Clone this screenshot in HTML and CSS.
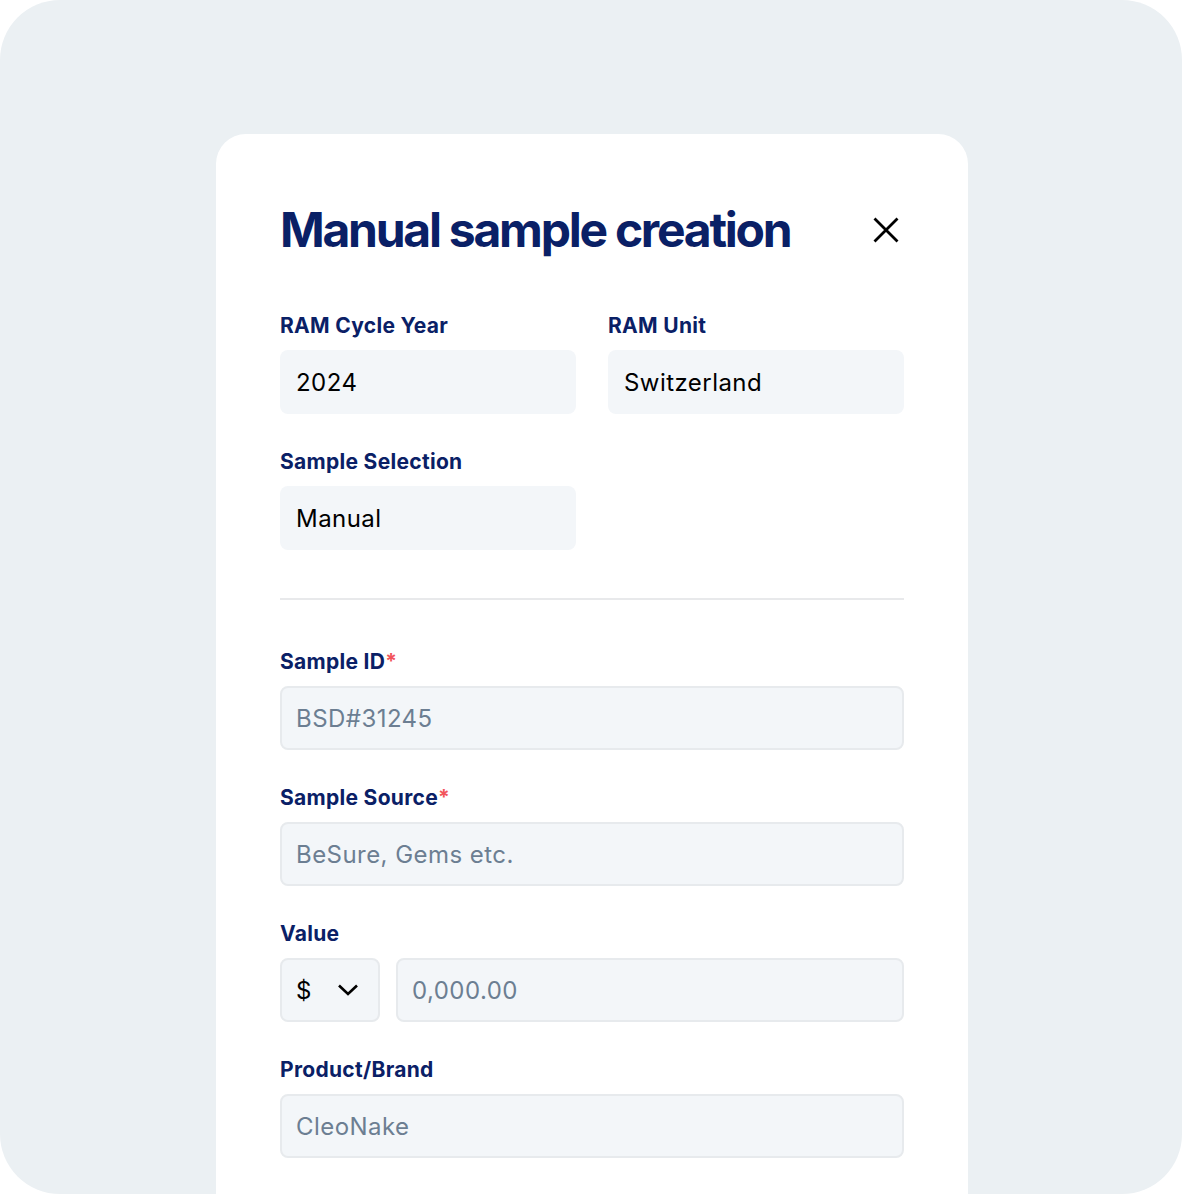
FILE: index.html
```html
<!DOCTYPE html>
<html lang="en">
  <head>
    <meta charset="UTF-8" />
    <title>Manual sample creation</title>
    <link rel="stylesheet" href="styles.css">
  </head>
  <body>
    <div class="frame">
      <div class="modal">
        <div class="modal-header">
          <h1>Manual sample creation</h1>
          <button class="close" aria-label="Close">
            <svg width="26" height="26" viewBox="0 0 26 26">
              <path d="M1.5 1.5 L24.5 24.5 M24.5 1.5 L1.5 24.5" stroke="#000" stroke-width="2.8" fill="none" />
            </svg>
          </button>
        </div>

        <div class="row">
          <div class="field">
            <label>RAM Cycle Year</label>
            <div class="box">2024</div>
          </div>
          <div class="field">
            <label>RAM Unit</label>
            <div class="box">Switzerland</div>
          </div>
        </div>
        <div class="row">
          <div class="field">
            <label>Sample Selection</label>
            <div class="box">Manual</div>
          </div>
          <div class="field"></div>
        </div>

        <hr class="divider" />

        <div class="field">
          <label for="sid">Sample ID<span class="req">*</span></label>
          <input type="text" class="input" id="sid" placeholder="BSD#31245" />
        </div>
        <div class="field">
          <label for="src">Sample Source<span class="req">*</span></label>
          <input type="text" class="input" id="src" placeholder="BeSure, Gems etc." />
        </div>
        <div class="field">
          <label for="val">Value</label>
          <div class="value-row">
            <div class="currency">
              <span>$</span>
              <svg width="22" height="14" viewBox="0 0 22 14">
                <path d="M2 2.5 L11 11 L20 2.5" stroke="#000" stroke-width="2.6" fill="none" />
              </svg>
            </div>
            <input type="text" class="input" id="val" placeholder="0,000.00" />
          </div>
        </div>
        <div class="field">
          <label for="brand">Product/Brand</label>
          <input type="text" class="input" id="brand" placeholder="CleoNake" />
        </div>
      </div>
    </div>
  </body>
</html>
```

FILE: styles.css
```css
* {
  box-sizing: border-box;
  margin: 0;
  padding: 0;
}

body {
  font-family: Inter, "Noto Sans", sans-serif;
  background-color: #fff;
}

.frame {
  height: 1194px;
  background-color: #ebf0f3;
  border-radius: 60px;
  padding: 134px 214px 0 216px;
  display: flex;
  overflow: hidden;
}

.modal {
  flex: 1;
  background-color: #fff;
  border-radius: 30px 30px 0 0;
  padding: 68px 64px 0;
}

.modal-header {
  display: flex;
  justify-content: space-between;
  align-items: center;
  margin-bottom: 56px;
}

h1 {
  font-size: 48px;
  line-height: 56px;
  font-weight: 700;
  letter-spacing: -2.25px;
  color: #0a2066;
}

.close {
  background: none;
  border: none;
  width: 26px;
  height: 26px;
  margin-right: 5px;
  cursor: pointer;
}

.close svg {
  display: block;
}

.row {
  display: grid;
  grid-template-columns: 1fr 1fr;
  gap: 32px;
}

.field {
  margin-bottom: 36px;
}

label {
  display: block;
  font-size: 21px;
  line-height: 24px;
  font-weight: 700;
  letter-spacing: 0.3px;
  color: #0a2066;
  margin-bottom: 12px;
}

.req {
  color: #f2545b;
}

.box,
.input,
.currency {
  height: 64px;
  border-radius: 8px;
  background-color: #f3f6f9;
  font-family: Inter, "Noto Sans", sans-serif;
  font-size: 24px;
  letter-spacing: 0.45px;
  color: #000;
}

.box {
  display: flex;
  align-items: center;
  padding: 0 16px;
}

.input {
  display: block;
  width: 100%;
  border: 2px solid #e7eaed;
  padding: 0 14px;
  outline: none;
}

.input::placeholder {
  color: #6c7e92;
}

.divider {
  border: none;
  height: 2px;
  background-color: #e8e9eb;
  margin: 12px 0 50px;
}

.value-row {
  display: flex;
  gap: 16px;
}

.currency {
  width: 100px;
  flex-shrink: 0;
  border: 2px solid #e7eaed;
  display: flex;
  align-items: center;
  gap: 25px;
  padding: 0 14px;
}

.currency svg {
  display: block;
}
```
